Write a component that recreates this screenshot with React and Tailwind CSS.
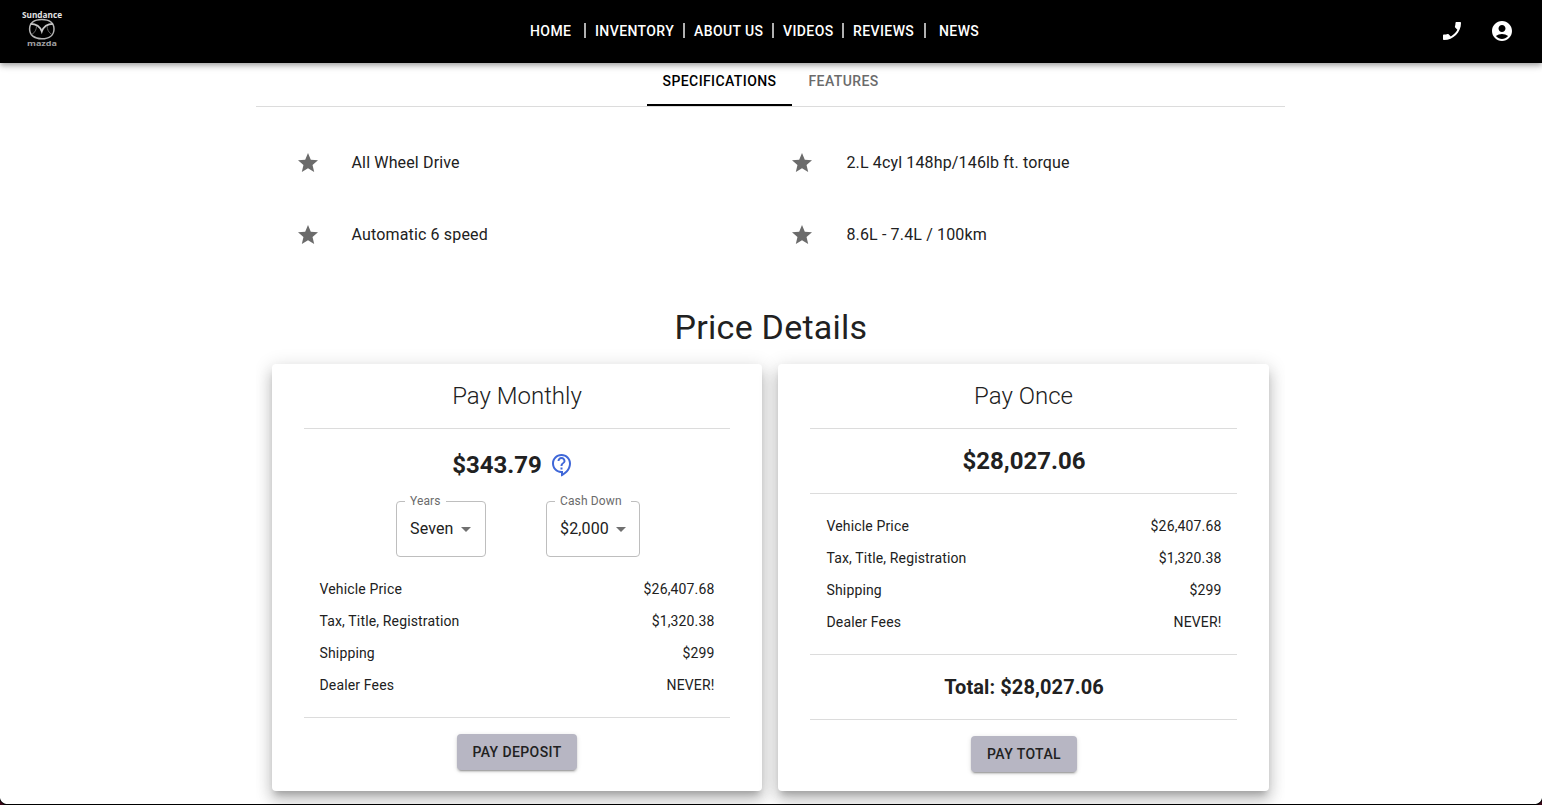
import React from "react";
import {
  MdPhoneEnabled,
  MdAccountCircle,
  MdStar,
  MdOutlineContactSupport,
  MdArrowDropDown,
} from "react-icons/md";

function Logo() {
  return (
    <svg width="42" height="40" viewBox="0 0 42 40" className="mt-[9px] ml-[21px] block">
      <text x="1" y="8.8" fontFamily="Open Sans, sans-serif" fontWeight="700" fontSize="8" fill="#e4e4e4" textLength="40" lengthAdjust="spacingAndGlyphs">
        Sundance
      </text>
      <path d="M20.800 10.500C29 10.500 33 14.500 33 20C33 26 28.500 29.800 20.800 29.800C13 29.800 8.600 26 8.600 20C8.600 14.500 12.600 10.500 20.800 10.500Z" fill="none" stroke="#b4b4b4" strokeWidth="1.500" />
      <path d="M9.500 14.800C15 14.800 19 17.200 20.800 22.500C22.600 17.200 26.600 14.800 32.100 14.800" fill="none" stroke="#c8c8c8" strokeWidth="1.700" />
      <path d="M15.500 17C15.500 20.500 14 23.500 10.800 25.500M26.100 17C26.100 20.500 27.600 23.500 30.800 25.500" fill="none" stroke="#6e6e6e" strokeWidth="0.900" />
      <text x="6" y="37.200" fontFamily="Open Sans, sans-serif" fontWeight="700" fontSize="7" fill="#a0a0a0" textLength="30" lengthAdjust="spacingAndGlyphs">
        mazda
      </text>
    </svg>
  );
}

function NavBar() {
  const item = "text-[14px] font-medium tracking-[0.4px] leading-6";
  const bar = "w-[2px] h-[15px] mb-[2px] bg-[#b0b0b0]";
  return (
    <header className="relative z-10 flex h-[63px] shrink-0 bg-black text-white shadow-[0px_2px_4px_-1px_rgba(0,0,0,0.2),0px_4px_5px_0px_rgba(0,0,0,0.14),0px_1px_10px_0px_rgba(0,0,0,0.12)]">
      <div className="w-[530px] shrink-0">
        <Logo />
      </div>
      <nav className="flex h-[62px] flex-1 items-center whitespace-nowrap">
        <span className={`${item} w-[54px]`}>HOME</span>
        <i className={bar} />
        <span className={`${item} ml-[9px] w-[88px]`}>INVENTORY</span>
        <i className={bar} />
        <span className={`${item} ml-[9px] w-[78px]`}>ABOUT US</span>
        <i className={bar} />
        <span className={`${item} ml-[9px] w-[59px]`}>VIDEOS</span>
        <i className={bar} />
        <span className={`${item} ml-[9px] w-[71px]`}>REVIEWS</span>
        <i className={bar} />
        <span className={`${item} ml-[13px]`}>NEWS</span>
      </nav>
      <div className="mr-[28px] flex h-[62px] items-center gap-[26px]">
        <MdPhoneEnabled size={24} />
        <MdAccountCircle size={24} />
      </div>
    </header>
  );
}

function Spec({ children }) {
  return (
    <li className="flex h-[72px] items-center">
      <MdStar size={24} className="mr-[32px] text-[#6b6b6b]" />
      <span className="text-[16px] leading-6 tracking-[0.15px]">{children}</span>
    </li>
  );
}

function Rule() {
  return <hr className="m-0 h-px shrink-0 border-0 bg-[#dcdcdc]" />;
}

const costs = [
  ["Vehicle Price", "$26,407.68"],
  ["Tax, Title, Registration", "$1,320.38"],
  ["Shipping", "$299"],
  ["Dealer Fees", "NEVER!"],
];

function Costs({ className }) {
  return (
    <dl className={`pr-[15.5px] ${className}`}>
      {costs.map(([label, value]) => (
        <div key={label} className="flex h-8 items-center justify-between text-[14px] leading-5 tracking-[0.15px]">
          <dt>{label}</dt>
          <dd>{value}</dd>
        </div>
      ))}
    </dl>
  );
}

function Select({ label, value, className, legendClassName }) {
  return (
    <fieldset className={`h-[61px] rounded-[4px] border border-[#bebebe] pl-[13px] ${className}`}>
      <legend className={`-ml-[5px] h-[11px] pl-[5px] text-[12px] leading-[11px] tracking-[0.13px] text-[#6b6b6b] ${legendClassName}`}>
        {label}
      </legend>
      <div className="mt-[10px] flex h-6 items-center">
        <span className="text-[16px] tracking-[0.15px]">{value}</span>
        <MdArrowDropDown size={24} className="text-[#707070]" />
      </div>
    </fieldset>
  );
}

function Card({ title, className, children }) {
  return (
    <section className={`flex h-[427px] flex-col rounded-[4px] bg-white px-8 shadow-[0px_6px_6px_-3px_rgba(0,0,0,0.2),0px_10px_14px_1px_rgba(0,0,0,0.14),0px_4px_18px_3px_rgba(0,0,0,0.12)] ${className}`}>
      <h2 className="flex h-[64px] items-center justify-center text-[24px] font-light">{title}</h2>
      <Rule />
      {children}
    </section>
  );
}

function PayButton({ className, children }) {
  return (
    <button className={`h-[36px] self-center rounded-[4px] bg-[#b7b6c3] text-[14px] font-medium tracking-[0.4px] shadow-[0px_3px_1px_-2px_rgba(0,0,0,0.2),0px_2px_2px_0px_rgba(0,0,0,0.14),0px_1px_5px_0px_rgba(0,0,0,0.12)] ${className}`}>
      {children}
    </button>
  );
}

export default function App() {
  return (
    <div className="relative flex h-[805px] w-[1542px] flex-col overflow-hidden bg-white font-[Roboto,sans-serif] text-[#212121]">
      <NavBar />
      <main className="ml-[256px] w-[1029px] overflow-x-clip">
        <div className="flex h-[44px] justify-center border-b border-[#dcdcdc] text-[14px] font-medium leading-[37px] tracking-[0.4px]">
          <div className="h-[43px] w-[145px] border-b-2 border-black text-center text-black">SPECIFICATIONS</div>
          <div className="w-[102px] pl-[16.5px] text-[#6b6b6b]">FEATURES</div>
        </div>
        <ul className="grid grid-cols-[494.9px_1fr] pt-[20px] pl-[39.5px]">
          <Spec>All Wheel Drive</Spec>
          <Spec>2.L 4cyl 148hp/146lb ft. torque</Spec>
          <Spec>Automatic 6 speed</Spec>
          <Spec>8.6L - 7.4L / 100km</Spec>
        </ul>
        <h1 className="mt-[35px] h-[42px] pl-px text-center text-[34px] leading-[42px] tracking-[0.25px]">Price Details</h1>
        <div className="mt-[16px] flex gap-4 px-4">
          <Card title="Pay Monthly" className="w-[490px]">
            <div className="flex h-[67px] items-center justify-center pt-[5px] pr-[8px]">
              <span className="text-[24px] font-bold">$343.79</span>
              <MdOutlineContactSupport size={24} className="ml-[8px] text-[#3f67d8]" />
            </div>
            <div className="flex h-[77px] pl-[92px]">
              <Select label="Years" value="Seven" className="w-[90px]" legendClassName="w-[41px]" />
              <Select label="Cash Down" value="$2,000" className="ml-[60px] w-[94px]" legendClassName="w-[76px]" />
            </div>
            <Costs className="pl-[15.5px]" />
            <div className="h-[16px]" />
            <Rule />
            <div className="h-[16px]" />
            <PayButton className="w-[120px]">PAY DEPOSIT</PayButton>
          </Card>
          <Card title="Pay Once" className="w-[491px]">
            <div className="flex h-[64px] items-center justify-center pl-px text-[24px] font-bold">$28,027.06</div>
            <Rule />
            <div className="h-[16px]" />
            <Costs className="pl-[16.5px]" />
            <div className="h-[16px]" />
            <Rule />
            <div className="flex h-[64px] items-center justify-center pl-px text-[20px] font-bold tracking-[0.1px]">Total: $28,027.06</div>
            <Rule />
            <div className="h-[16px]" />
            <PayButton className="w-[106px] pl-px">PAY TOTAL</PayButton>
          </Card>
        </div>
      </main>
      <svg className="absolute bottom-0 left-0" width="1542" height="7" viewBox="0 0 1542 7">
        <path d="M0 0C1 4 4 6 8 6H1534C1538 6 1541 4 1542 0V7H0Z" fill="#000" />
        <path d="M0 3L4 7H0ZM1542 3L1538 7H1542Z" fill="#3a0718" />
      </svg>
    </div>
  );
}
